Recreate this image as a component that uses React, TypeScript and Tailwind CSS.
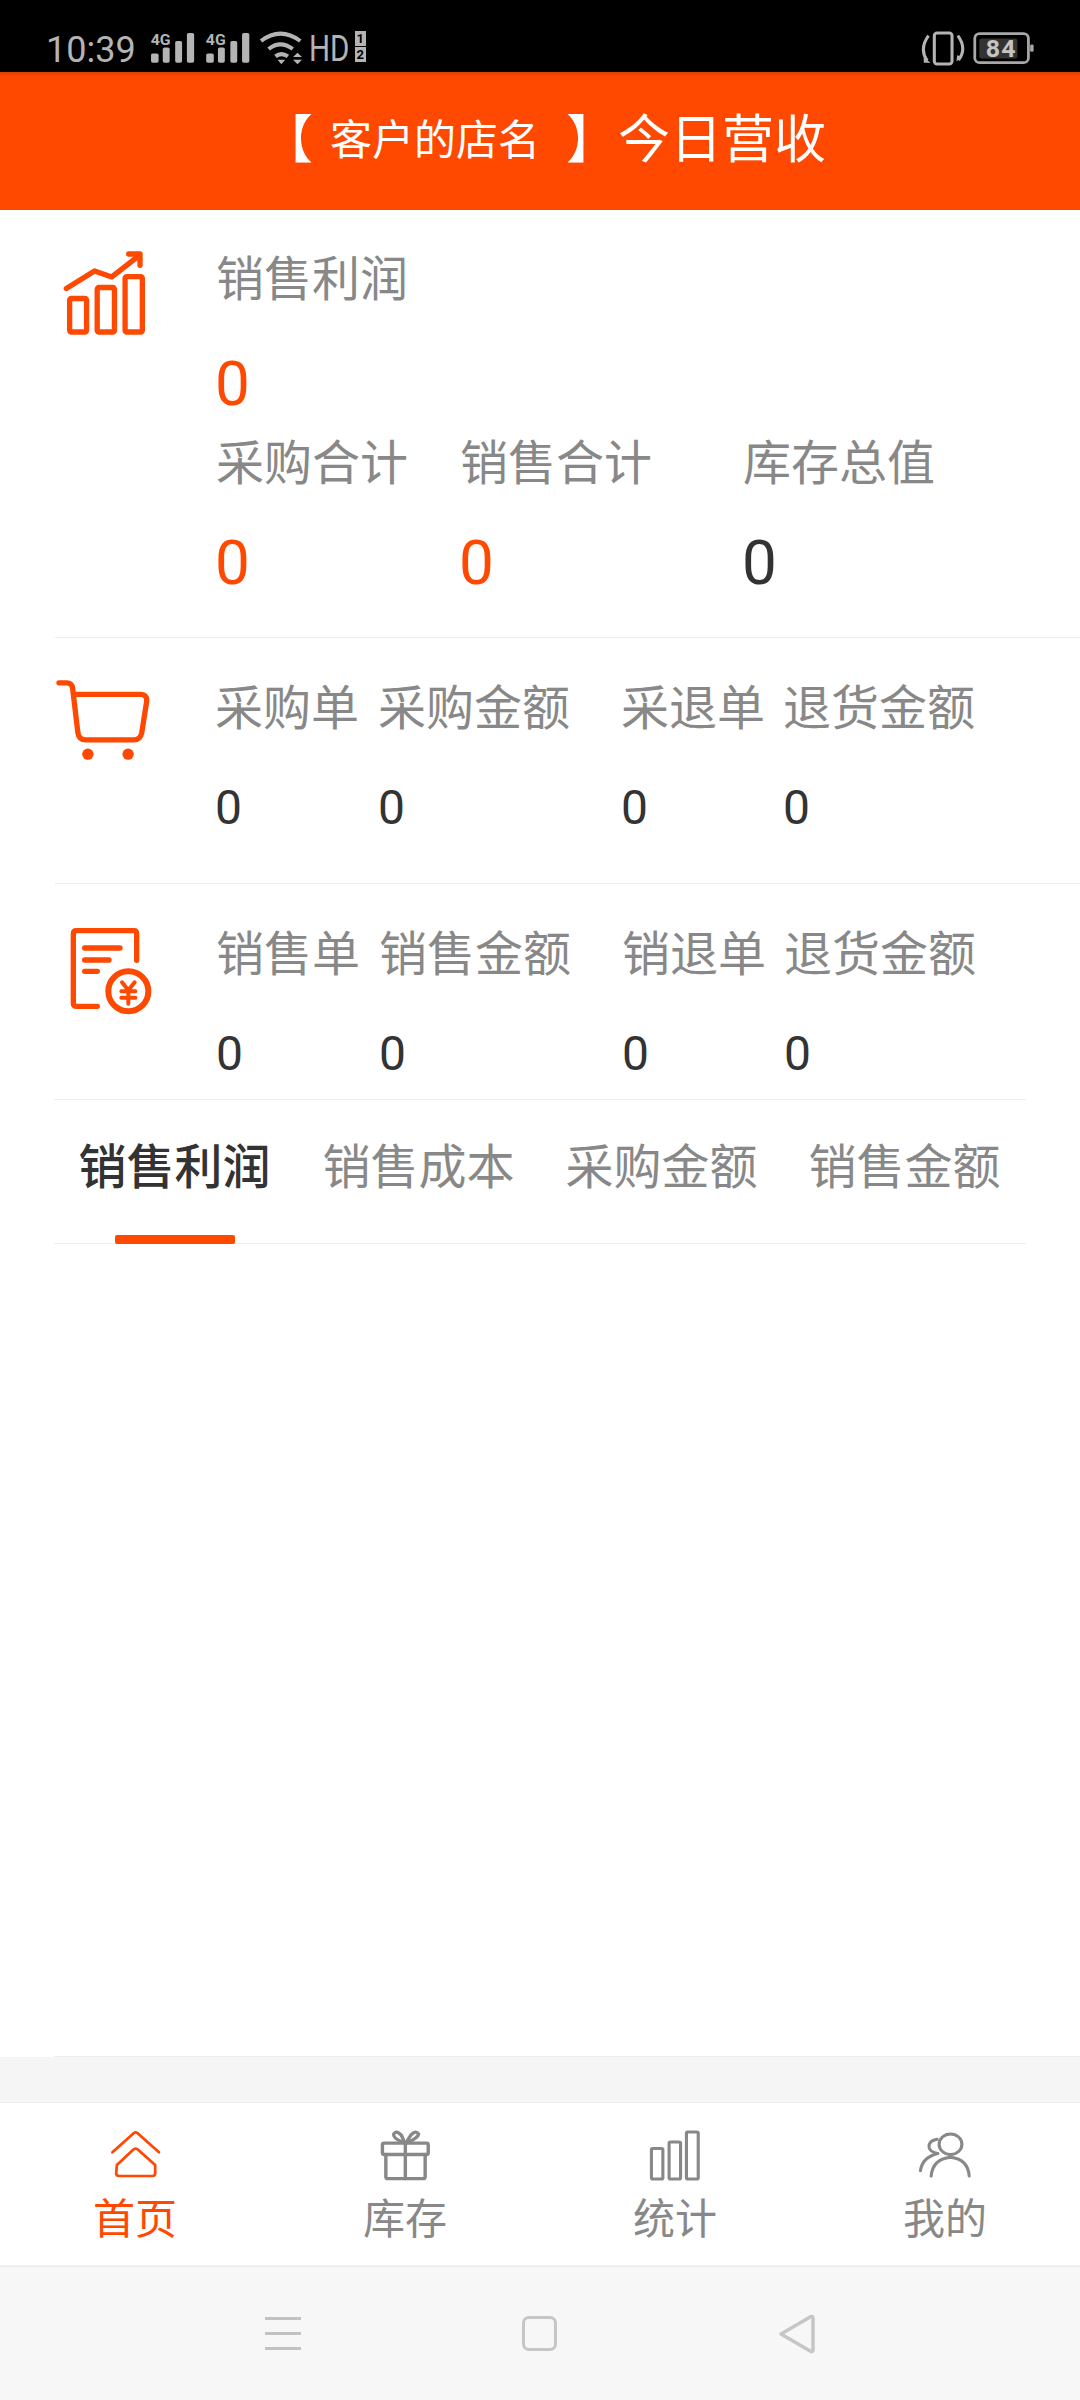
const orange = 'text-[#ff4800]'

function SignalIcon() {
  return (
    <svg viewBox="430 92 290 100" preserveAspectRatio="none" className="w-[100px] h-[33px]" fill="#b4b4b4">
      {[0, 160].map((dx) => (
        <g key={dx} transform={`translate(${dx} 0)`}>
          <text x="432" y="133" fontSize="46" fontWeight="700" fontFamily="Roboto, sans-serif">4G</text>
          <rect x="433" y="160" width="22" height="28" rx="5" />
          <rect x="467" y="142" width="20" height="46" rx="5" />
          <rect x="503" y="122" width="20" height="66" rx="5" />
          <rect x="537" y="98" width="21" height="90" rx="5" />
        </g>
      ))}
    </svg>
  )
}

function WifiIcon() {
  return (
    <svg viewBox="750 92 128 102" preserveAspectRatio="none" className="w-[44px] h-[34px]" fill="none" stroke="#b4b4b4" strokeWidth="12">
      <path d="M756 122 Q812 78 870 122" />
      <path d="M778 146 Q812 118 848 146" />
      <path d="M798 168 Q815 155 834 168" />
      <path d="M804 178 H826 L815 192 Z" fill="#b4b4b4" stroke="none" />
      <path d="M849 170 L862 157 L875 170 Z M849 178 H875 L862 192 Z" fill="#b4b4b4" stroke="none" />
    </svg>
  )
}

function SimBadge() {
  return (
    <div className="flex flex-col gap-[1px] w-[11px] ml-[5px]">
      {['1', '2'].map((n) => (
        <span key={n} className="h-[15px] bg-[#b4b4b4] text-black text-[13px] leading-[15px] font-bold text-center">
          {n}
        </span>
      ))}
    </div>
  )
}

function VibrateIcon() {
  return (
    <svg viewBox="1105 92 135 104" preserveAspectRatio="none" className="w-[46px] h-[35px]" fill="none" stroke="#b4b4b4" strokeWidth="9">
      <rect x="1147" y="98" width="52" height="92" rx="8" />
      <path d="M1130 106 Q1102 145 1126 180" />
      <path d="M1216 106 Q1244 145 1218 178" />
      <path d="M1116 170 L1136 186 L1116 186 Z M1230 170 L1212 182 L1214 164 Z" fill="#b4b4b4" stroke="none" />
    </svg>
  )
}

function BatteryIcon() {
  return (
    <svg viewBox="1260 92 182 104" preserveAspectRatio="none" className="w-[63px] h-[35px] ml-[6px]" fill="none">
      <rect x="1268" y="100" width="155" height="86" rx="14" stroke="#a8a8a8" strokeWidth="8" />
      <rect x="1428" y="132" width="10" height="22" rx="4" fill="#a8a8a8" />
      <rect x="1281" y="114" width="110" height="60" rx="7" fill="#333333" />
      <text x="1300" y="170" fontSize="72" fontWeight="700" fill="#c4c4c4" fontFamily="Roboto, sans-serif" textLength="86">84</text>
    </svg>
  )
}

function StatusBar() {
  return (
    <div className="h-[72px] shrink-0 bg-black flex items-start pt-[31px] pl-[46px] pr-[45px] text-[#b4b4b4] [font-family:Roboto,sans-serif]">
      <span className="text-[36px] leading-[38px] mr-[14px]">10:39</span>
      <SignalIcon />
      <span className="ml-[9px]"><WifiIcon /></span>
      <span className="w-[41px] ml-[6px] text-[36px] leading-[36px] scale-x-[0.82] origin-left">HD</span>
      <SimBadge />
      <div className="ml-auto flex items-start">
        <VibrateIcon />
        <BatteryIcon />
      </div>
    </div>
  )
}

function Header() {
  return (
    <div className="h-[138px] shrink-0 bg-[#ff4800] flex flex-col text-white">
      <div className="h-[4px] bg-gradient-to-b from-[#dd3f00] to-[#ff4800]" />
      <div className="flex-1 flex items-center justify-center pb-[4px] pl-[7px]">
        <span className="text-[52px] leading-[60px]">【</span>
        <span className="text-[42px] leading-[60px] ml-[17px]">客户的店名</span>
        <span className="text-[52px] leading-[60px] ml-[26px]">】</span>
        <span className="text-[52px] leading-[60px]">今日营收</span>
      </div>
    </div>
  )
}

function Cell({ label, value, width, color = 'text-[#333333]', valueClass = 'text-[48px] mt-[29px]' }: { label: string; value: string; width?: string; color?: string; valueClass?: string }) {
  return (
    <div className={width}>
      <div className="text-[48px] leading-[70px] text-[#888888] whitespace-nowrap">{label}</div>
      <div className={`${valueClass} leading-[70px] ${color}`}>{value}</div>
    </div>
  )
}

function ChartIcon() {
  return (
    <svg viewBox="190 90 250 260" className="w-[83px] h-[87px]" fill="none" stroke="#ff4800" strokeWidth="16" strokeLinecap="round" strokeLinejoin="round">
      <rect x="210" y="235" width="51" height="101" rx="5" />
      <rect x="293" y="202" width="52" height="134" rx="5" />
      <rect x="377" y="169" width="52" height="167" rx="5" />
      <path d="M200 205 L285 152 L337 170 L420 105" />
      <path d="M388 101 H422 V135" />
    </svg>
  )
}

function CartIcon() {
  return (
    <svg viewBox="160 120 295 255" className="w-[98px] h-[85px]" fill="none" stroke="#ff4800" strokeWidth="16" strokeLinecap="round" strokeLinejoin="round">
      <path d="M175 134 H198 Q214 134 216 150 L232 285 Q235 306 255 306 H400 Q420 306 424 285 L439 190 Q441 169 420 169 H222" />
      <circle cx="262" cy="349" r="17" fill="#ff4800" stroke="none" />
      <circle cx="383" cy="349" r="17" fill="#ff4800" stroke="none" />
    </svg>
  )
}

function BillIcon() {
  return (
    <svg viewBox="205 860 255 270" className="w-[85px] h-[90px]" fill="none" stroke="#ff4800" strokeWidth="16" strokeLinecap="round" strokeLinejoin="round">
      <path d="M408 960 V880 Q408 871 400 871 H227 Q218 871 218 880 V1088 Q218 1098 228 1098 H290" />
      <path d="M252 923 H358 M252 959 H325 M252 993 H290" />
      <circle cx="383" cy="1053" r="60" strokeWidth="18" />
      <path d="M364 1026 L383 1050 L402 1026 M362 1053 H404 M362 1072 H404 M383 1050 V1090" strokeWidth="12" />
    </svg>
  )
}

function TopSection() {
  const big = 'text-[62px] mt-[29px] -ml-[1px]'
  return (
    <section className="h-[428px] shrink-0 ml-[55px] border-b border-[#eeeeee] flex">
      <div className="w-[161px] shrink-0 pt-[40px] pl-[8px]">
        <ChartIcon />
      </div>
      <div className="pt-[35px]">
        <Cell label="销售利润" value="0" color={orange} valueClass="text-[62px] mt-[34px] -ml-[1px]" />
        <div className="flex mt-[10px]">
          <Cell label="采购合计" value="0" color={orange} width="w-[244px]" valueClass={big} />
          <Cell label="销售合计" value="0" color={orange} width="w-[283px]" valueClass={big} />
          <Cell label="库存总值" value="0" valueClass={big} />
        </div>
      </div>
    </section>
  )
}

function OrderRow({ icon, cells, className, iconClass }: { icon: React.ReactNode; cells: string[]; className: string; iconClass: string }) {
  const widths = ['w-[163px]', 'w-[243px]', 'w-[162px]', 'w-[200px]']
  return (
    <section className={`shrink-0 ml-[55px] flex ${className}`}>
      <div className={`w-[161px] shrink-0 ${iconClass}`}>{icon}</div>
      <div className="flex pt-[36px]">
        {cells.map((c, i) => (
          <Cell key={i} label={c} value="0" width={widths[i]} />
        ))}
      </div>
    </section>
  )
}

function Tabs() {
  const items = ['销售利润', '销售成本', '采购金额', '销售金额']
  return (
    <div className="h-[145px] shrink-0 mx-[54px] border-y border-[#eeeeee] flex">
      {items.map((t, i) => (
        <div key={t} className="relative flex-1 flex justify-center pt-[33px]">
          <span className={`text-[48px] leading-[70px] whitespace-nowrap ${i === 0 ? 'text-[#333333] font-medium -ml-[2px]' : 'text-[#888888]'}`}>{t}</span>
          {i === 0 && <span className="absolute bottom-[-1px] left-[61px] w-[120px] h-[9px] rounded-[2px] bg-[#ff4800]" />}
        </div>
      ))}
    </div>
  )
}

function HomeIcon() {
  return (
    <svg viewBox="315 295 155 150" preserveAspectRatio="none" className="w-[53px] h-[50px]" fill="none" stroke="#ff4800" strokeWidth="8" strokeLinecap="round" strokeLinejoin="round">
      <path d="M325 365 L388 307 Q393 303 398 307 L461 365" />
      <path d="M338 403 L385 358 Q393 350 401 358 L450 403 V428 Q450 436 442 436 H345 Q336 436 336 428 Z" />
    </svg>
  )
}

function GiftIcon() {
  return (
    <svg viewBox="1100 298 155 158" preserveAspectRatio="none" className="w-[53px] h-[53px]" fill="none" stroke="#888888" strokeWidth="10" strokeLinecap="round" strokeLinejoin="round">
      <rect x="1110" y="340" width="134" height="34" rx="5" />
      <path d="M1120 374 V440 Q1120 446 1126 446 H1229 Q1235 446 1235 440 V374" />
      <path d="M1177 340 V446" />
      <path d="M1170 338 Q1140 325 1143 313 Q1150 300 1165 316 L1175 338" />
      <path d="M1184 338 Q1214 325 1216 313 Q1208 300 1193 316 L1180 338" />
    </svg>
  )
}

function BarsIcon() {
  return (
    <svg viewBox="318 298 150 160" preserveAspectRatio="none" className="w-[52px] h-[53px]" fill="none" stroke="#888888" strokeWidth="9" strokeLinejoin="round">
      <rect x="325" y="357" width="33" height="92" rx="4" />
      <rect x="376" y="337" width="33" height="112" rx="4" />
      <rect x="426" y="307" width="34" height="142" rx="4" />
    </svg>
  )
}

function UserIcon() {
  return (
    <svg viewBox="1090 300 165 145" preserveAspectRatio="none" className="w-[57px] h-[48px] mt-[2px]" fill="none" stroke="#888888" strokeWidth="9" strokeLinecap="round">
      <ellipse cx="1187" cy="340" rx="33" ry="31" />
      <path d="M1131 436 Q1135 385 1187 379 Q1238 385 1241 436" />
      <path d="M1100 420 Q1105 380 1150 368" />
      <path d="M1148 325 Q1122 330 1125 350 Q1128 364 1150 368" />
    </svg>
  )
}

function TabBar() {
  const tabs = [
    { label: '首页', icon: <HomeIcon />, active: true },
    { label: '库存', icon: <GiftIcon /> },
    { label: '统计', icon: <BarsIcon /> },
    { label: '我的', icon: <UserIcon /> },
  ]
  return (
    <nav className="h-[163px] shrink-0 bg-white border-t border-[#ececec] flex">
      {tabs.map((t) => (
        <div key={t.label} className="flex-1 flex flex-col items-center pt-[26px]">
          <div className="h-[53px]">{t.icon}</div>
          <span className={`text-[42px] leading-[50px] mt-[13px] ${t.active ? orange : 'text-[#888888]'}`}>{t.label}</span>
        </div>
      ))}
    </nav>
  )
}

function NavBar() {
  return (
    <div className="flex-1 bg-[#f7f7f7] border-t-2 border-[#eeeeee] flex items-center justify-center gap-[221px]">
      <div className="w-[36px] flex flex-col gap-[12px]">
        <span className="h-[3px] bg-[#c2c2c2]" />
        <span className="h-[3px] bg-[#c2c2c2]" />
        <span className="h-[3px] bg-[#c2c2c2]" />
      </div>
      <div className="w-[35px] h-[35px] rounded-[7px] border-[3px] border-[#c6c6c6]" />
      <svg viewBox="0 0 36 40" className="w-[38px] h-[40px]" fill="none" stroke="#c6c6c6" strokeWidth="3.5" strokeLinejoin="round">
        <path d="M2 20 L32 2.5 Q34 2 34 4 V36 Q34 38 32 37.5 Z" />
      </svg>
    </div>
  )
}

export default function App() {
  return (
    <div className="w-[1080px] h-[2400px] flex flex-col bg-white overflow-hidden [font-family:Roboto,'Noto_Sans_CJK_SC',sans-serif]">
      <StatusBar />
      <Header />
      <TopSection />
      <OrderRow
        className="h-[246px] border-b border-[#eeeeee]"
        iconClass="pt-[40px] -ml-[1px]"
        icon={<CartIcon />}
        cells={['采购单', '采购金额', '采退单', '退货金额']}
      />
      <OrderRow
        className="h-[215px]"
        iconClass="pt-[43px] pl-[14px]"
        icon={<BillIcon />}
        cells={['销售单', '销售金额', '销退单', '退货金额']}
      />
      <Tabs />
      <div className="h-[813px] shrink-0 ml-[54px] border-b border-[#eeeeee]" />
      <div className="h-[45px] shrink-0 bg-[#f5f5f5]" />
      <TabBar />
      <NavBar />
    </div>
  )
}
